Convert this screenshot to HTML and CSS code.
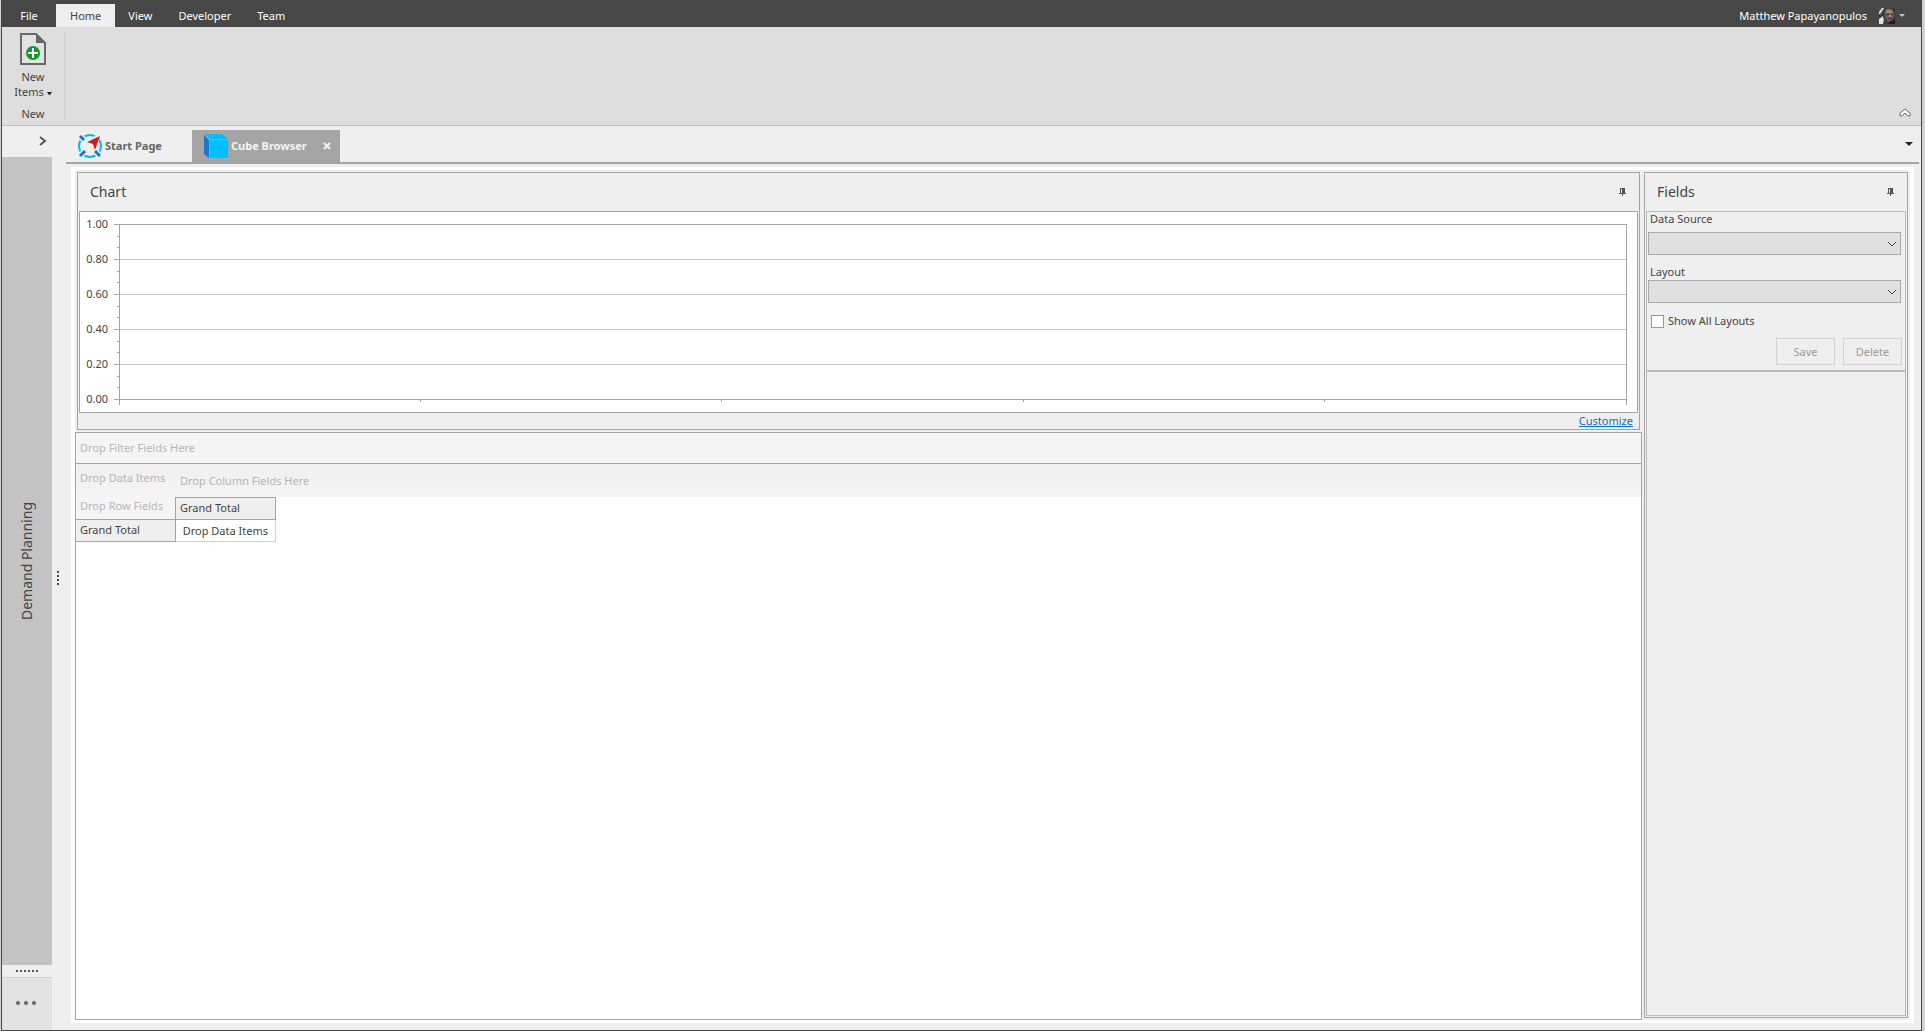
FILE: index.html
```html
<!DOCTYPE html>
<html lang="en">
<head>
    <meta charset="UTF-8">
    <meta name="viewport" content="width=device-width, initial-scale=1.0">
    <title>Cube Browser</title>
    <link rel="stylesheet" href="styles.css">
</head>
<body>
<div class="window">
    <header class="titlebar">
        <nav class="menu">
            <button type="button" class="menu-tab file">File</button>
            <button type="button" class="menu-tab active">Home</button>
            <button type="button" class="menu-tab">View</button>
            <button type="button" class="menu-tab">Developer</button>
            <button type="button" class="menu-tab">Team</button>
        </nav>
        <button type="button" class="user">
            <span>Matthew Papayanopulos</span>
            <svg class="avatar" width="16" height="16" viewBox="0 0 16 16">
                <rect width="16" height="16" fill="#3b3936"/>
                <path d="M0 0h6L2 7H0z" fill="#3f5358"/>
                <path d="M3 0h2L1 6H0V4zM0 11l4-3 1 3-1 5H0z" fill="#dce6e6"/>
                <path d="M6 2l3-2 5 2 1 6-2 5-4 1-3-5z" fill="#745f55"/>
                <path d="M8 2h4l2 3H7zM10 7h2v2h-2z" fill="#a58b7d"/>
                <path d="M7 6h3v1H7zM12 6h2v1h-2zM9 10h4v1H9z" fill="#382f2b"/>
                <path d="M4 5l2-3v7l2 5-2 2-2-8z" fill="#3a4346"/>
                <path d="M10 14l6-3v5h-7z" fill="#1f1c1b"/>
            </svg>
            <svg width="6" height="3" viewBox="0 0 6 3"><path d="M0 0h6L3 3z" fill="#c8c8c8"/></svg>
        </button>
    </header>

    <section class="ribbon">
        <div class="ribbon-group">
            <button type="button" class="ribbon-button">
                <svg width="28" height="32" viewBox="0 0 28 32">
                    <path d="M2 1h15l9 9v21H2z" fill="#e2e2e2" stroke="#686868" stroke-width="2"/>
                    <path d="M17 0l10 10H17z" fill="#686868"/>
                    <circle cx="14" cy="20" r="7" fill="#0e9b28"/>
                    <path d="M13 15h2v4h4v2h-4v4h-2v-4H9v-2h4z" fill="#fff"/>
                </svg>
                <span>New</span>
                <span>Items <svg width="5" height="3" viewBox="0 0 5 3"><path d="M0 0h5L3 3H2z" fill="#222"/></svg></span>
            </button>
            <span class="group-name">New</span>
        </div>
        <button type="button" class="collapse" aria-label="Collapse ribbon">
            <svg width="12" height="9" viewBox="0 0 12 9"><path d="M1 5l5-4 5 4v3H9L6 5 3 8H1z" fill="#fff" stroke="#686868"/></svg>
        </button>
    </section>

    <div class="content">
        <aside class="sidebar">
            <button type="button" class="expand" aria-label="Expand">
                <svg width="8" height="10" viewBox="0 0 8 10"><path d="M1 1l5 4-5 4" fill="none" stroke="#555" stroke-width="2"/></svg>
            </button>
            <div class="nav-group"><span>Demand Planning</span></div>
            <div class="nav-grip"><svg width="22" height="2"><path d="M0 1h22" stroke="#555" stroke-width="2" stroke-dasharray="2 2"/></svg></div>
            <button type="button" class="nav-more" aria-label="More">
                <svg width="20" height="4" viewBox="0 0 20 4"><circle cx="2" cy="2" r="2"/><circle cx="10" cy="2" r="2"/><circle cx="18" cy="2" r="2"/></svg>
            </button>
        </aside>
        <div class="splitter"><svg width="2" height="14"><path d="M1 0v14" stroke="#444" stroke-width="2" stroke-dasharray="2 2"/></svg></div>

        <main class="documents">
            <div class="doc-tabs">
                <button type="button" class="doc-tab start">
                    <svg width="24" height="24" viewBox="0 0 24 24">
                        <circle cx="12" cy="12" r="11" fill="none" stroke="#00bdf9" stroke-width="2"/>
                        <path d="M15 8l7-7M1 1l5 5M1 23l5-5M23 23l-5-5" stroke="#efefef" stroke-width="6"/>
                        <path d="M2 2l4 4M2 22l5-5M22 22l-5-5" stroke="#1976d2" stroke-width="3"/>
                        <path d="M22 2l-5 14-2-6-6-2z" fill="#d8171e"/>
                    </svg>
                    Start Page
                </button>
                <button type="button" class="doc-tab active">
                    <svg width="24" height="24" viewBox="0 0 24 24">
                        <path d="M0 1l5 5v18l-5-4z" fill="#1976d2"/>
                        <path d="M1 0h17l6 5H6z" fill="#00bfff"/>
                        <path d="M6 6h18v18H6z" fill="#00bfff"/>
                    </svg>
                    Cube Browser
                    <svg class="close" width="8" height="8" viewBox="0 0 8 8"><path d="M1 1l6 6M7 1L1 7" stroke="#f4f4f4" stroke-width="2"/></svg>
                </button>
                <button type="button" class="doc-list" aria-label="Open documents">
                    <svg width="8" height="4" viewBox="0 0 8 4"><path d="M0 0h8L4 4z" fill="#222"/></svg>
                </button>
            </div>

            <div class="workspace">
                <div class="center">
                    <section class="panel chart">
                        <div class="panel-header">
                            <h2>Chart</h2>
                            <button type="button" class="pin" aria-label="Pin chart">
                                <svg width="7" height="8" viewBox="0 0 7 8"><path d="M1 0h5v5h1v1H4v2H3V6H0V5h1z" fill="#555"/><path d="M2 1h1v4H2z" fill="#efefef"/></svg>
                            </button>
                        </div>
                        <div class="chart-box">
                            <svg class="axis" width="39" height="200" viewBox="0 0 39 200">
                                <g>
                                    <text x="28" y="16">1.00</text>
                                    <text x="28" y="51">0.80</text>
                                    <text x="28" y="86">0.60</text>
                                    <text x="28" y="121">0.40</text>
                                    <text x="28" y="156">0.20</text>
                                    <text x="28" y="191">0.00</text>
                                </g>
                                <path d="M34 12h5M34 47h5M34 82h5M34 117h5M34 152h5M34 187h5M37 24h2M37 35h2M37 59h2M37 70h2M37 94h2M37 105h2M37 129h2M37 140h2M37 164h2M37 175h2"/>
                            </svg>
                            <svg class="plot" height="200">
                                <g class="grid-lines">
                                    <line x1="0" x2="100%" y1="47" y2="47"/>
                                    <line x1="0" x2="100%" y1="82" y2="82"/>
                                    <line x1="0" x2="100%" y1="117" y2="117"/>
                                    <line x1="0" x2="100%" y1="152" y2="152"/>
                                </g>
                                <g class="frame">
                                    <line x1="0" x2="100%" y1="12" y2="12"/>
                                    <line x1="0" x2="100%" y1="187" y2="187"/>
                                    <line x1="20%" x2="20%" y1="187" y2="190"/>
                                    <line x1="40%" x2="40%" y1="187" y2="190"/>
                                    <line x1="60%" x2="60%" y1="187" y2="190"/>
                                    <line x1="80%" x2="80%" y1="187" y2="190"/>
                                    <line x1="0" x2="0" y1="12" y2="193"/>
                                    <line x1="100%" x2="100%" y1="12" y2="193"/>
                                </g>
                            </svg>
                        </div>
                        <div class="chart-footer"><a href="#">Customize</a></div>
                    </section>

                    <section class="pivot">
                        <table>
                            <colgroup><col class="fixed"><col class="fixed"><col></colgroup>
                            <tr class="filter-row">
                                <td colspan="3">Drop Filter Fields Here</td>
                            </tr>
                            <tr class="column-row">
                                <td>Drop Data Items</td>
                                <td colspan="2" class="column-fields">Drop Column Fields Here</td>
                            </tr>
                            <tr class="header-row">
                                <td class="row-fields">Drop Row Fields</td>
                                <th scope="col">Grand Total</th>
                                <td></td>
                            </tr>
                            <tr class="total-row">
                                <th scope="row">Grand Total</th>
                                <td class="data">Drop Data Items</td>
                                <td></td>
                            </tr>
                        </table>
                    </section>
                </div>

                <section class="panel fields">
                    <div class="panel-header">
                        <h2>Fields</h2>
                        <button type="button" class="pin" aria-label="Pin fields">
                            <svg width="7" height="8" viewBox="0 0 7 8"><path d="M1 0h5v5h1v1H4v2H3V6H0V5h1z" fill="#555"/><path d="M2 1h1v4H2z" fill="#efefef"/></svg>
                        </button>
                    </div>
                    <form class="fields-form">
                        <label for="dataSource">Data Source</label>
                        <div class="combo">
                            <select id="dataSource"></select>
                            <svg width="9" height="6" viewBox="0 0 9 6"><path d="M0 1l4 4 4-4" fill="none" stroke="#444"/></svg>
                        </div>
                        <label for="layout">Layout</label>
                        <div class="combo">
                            <select id="layout"></select>
                            <svg width="9" height="6" viewBox="0 0 9 6"><path d="M0 1l4 4 4-4" fill="none" stroke="#444"/></svg>
                        </div>
                        <div class="check">
                            <input type="checkbox" id="showAll">
                            <label for="showAll">Show All Layouts</label>
                        </div>
                        <div class="buttons">
                            <button type="button" disabled>Save</button>
                            <button type="button" disabled>Delete</button>
                        </div>
                    </form>
                    <div class="field-list"></div>
                </section>
            </div>
        </main>
    </div>
</div>
</body>
</html>
```
FILE: styles.css
```css
* {
    box-sizing: border-box;
}

body {
    margin: 0;
    background-color: #d2d2d2;
    font-family: "Noto Sans", "Open Sans", sans-serif;
    font-size: 11px;
    line-height: 16px;
    color: #444;
}

button {
    padding: 0;
    border: none;
    background: none;
    font: inherit;
    color: inherit;
}

svg {
    display: block;
    flex: none;
}

.window {
    display: flex;
    flex-direction: column;
    height: 100vh;
    margin: 0 3px 0 1px;
    border: 1px solid #474747;
    border-top: none;
    background-color: #efefef;
}

/* title bar */
.titlebar {
    display: flex;
    justify-content: space-between;
    height: 27px;
    background-color: #474747;
    color: #fff;
}

.menu {
    display: flex;
    align-items: flex-end;
}

.menu-tab {
    height: 23px;
    padding: 0 13px;
}

.menu-tab.file {
    width: 54px;
}

.menu-tab.active {
    padding: 0 14px;
    background-color: #efefef;
    color: #444;
}

.user {
    display: flex;
    align-items: center;
    gap: 4px;
    padding: 4px 16px 0 0;
}

.avatar {
    margin-left: 8px;
}

/* ribbon */
.ribbon {
    display: flex;
    justify-content: space-between;
    align-items: flex-end;
    height: 99px;
    border-bottom: 1px solid #c0c0c0;
    background-color: #dedede;
}

.ribbon-group {
    display: flex;
    flex-direction: column;
    justify-content: space-between;
    align-items: center;
    width: 63px;
    height: 86px;
    margin-bottom: 6px;
    border-right: 1px solid #d0d0d0;
}

.ribbon-button {
    display: flex;
    flex-direction: column;
    align-items: center;
    line-height: 15px;
}

.ribbon-button > svg {
    margin-bottom: 4px;
}

.ribbon-button span svg {
    display: inline-block;
    vertical-align: middle;
}

.group-name {
    line-height: 10px;
}

.collapse {
    padding: 0 10px 8px 0;
}

/* body of the window */
.content {
    display: flex;
    flex: 1;
    min-height: 0;
}

.sidebar {
    display: flex;
    flex-direction: column;
    width: 50px;
}

.expand {
    display: flex;
    justify-content: flex-end;
    align-items: center;
    height: 31px;
    padding: 0 5px 2px 0;
}

.nav-group {
    display: flex;
    flex: 1;
    justify-content: center;
    align-items: center;
    background-color: #c3c3c3;
    font-size: 14px;
}

.nav-group span {
    writing-mode: vertical-rl;
    transform: rotate(180deg);
}

.nav-grip {
    display: flex;
    justify-content: center;
    align-items: center;
    height: 13px;
    border-bottom: 1px solid #cfcfcf;
}

.nav-more {
    display: flex;
    justify-content: center;
    align-items: center;
    height: 52px;
    padding: 0 2px 2px 0;
    background-color: #e3e3e3;
    fill: #666;
}

.splitter {
    display: flex;
    align-items: center;
    width: 14px;
    padding-left: 5px;
}

.documents {
    display: flex;
    flex: 1;
    flex-direction: column;
    min-width: 0;
    padding-right: 2px;
}

.doc-tabs {
    display: flex;
    align-items: flex-end;
    height: 38px;
    border-bottom: 2px solid #a5a5a5;
}

.doc-tab {
    display: flex;
    align-items: center;
    gap: 3px;
    height: 32px;
    padding: 0 9px 0 12px;
    font-weight: bold;
    color: #666;
}

.doc-tab.start {
    width: 126px;
}

.doc-tab.active {
    width: 148px;
    background-color: #a5a5a5;
    color: #f4f4f4;
}

.close {
    margin-left: auto;
}

.doc-list {
    align-self: center;
    margin-left: auto;
    padding-right: 6px;
}

.workspace {
    display: flex;
    flex: 1;
    gap: 2px;
    min-height: 0;
    margin: 3px 5px 7px;
    padding-right: 2px;
    border: solid #fff;
    border-width: 3px 4px;
}

.center {
    display: flex;
    flex: 1;
    flex-direction: column;
    gap: 2px;
    min-width: 0;
}

.panel {
    display: flex;
    flex-direction: column;
    border: 1px solid #a5a5a5;
}

.panel-header {
    display: flex;
    justify-content: space-between;
    align-items: center;
    height: 38px;
    padding: 0 13px 0 12px;
}

.panel-header h2 {
    margin: 0;
    font-size: 14px;
    font-weight: normal;
}

/* chart */
.chart {
    margin: 2px 2px 0;
}

.chart-box {
    display: flex;
    margin: 0 1px;
    padding-right: 11px;
    border: 1px solid #a5a5a5;
    background-color: #fff;
}

.axis path {
    stroke: #a5a5a5;
    shape-rendering: crispEdges;
}

.axis text {
    font-size: 11px;
    fill: #444;
    text-anchor: end;
}

.plot {
    flex: 1;
    min-width: 0;
    overflow: visible;
    shape-rendering: crispEdges;
}

.grid-lines {
    stroke: #c8c8c8;
}

.frame {
    stroke: #a5a5a5;
}

.chart-footer {
    height: 16px;
    padding-right: 6px;
    text-align: right;
}

.chart-footer a {
    color: #0072c6;
}

/* pivot grid */
.pivot {
    flex: 1;
    border: 1px solid #a5a5a5;
    background-color: #fff;
}

.pivot table {
    width: 100%;
    table-layout: fixed;
    border-spacing: 0;
    color: #b5b5b5;
}

.pivot col.fixed {
    width: 100px;
}

.pivot td,
.pivot th {
    padding: 0 4px;
    font-weight: normal;
    text-align: left;
    white-space: nowrap;
}

.pivot th {
    padding-bottom: 2px;
    border-right: 1px solid #a5a5a5;
    border-bottom: 1px solid #a5a5a5;
    background-color: #efefef;
    color: #444;
}

.filter-row td {
    height: 31px;
    border-bottom: 1px solid #a5a5a5;
    background-color: #f5f5f5;
}

.column-row {
    height: 33px;
    background: linear-gradient(#f0f0f0, #f4f4f4);
}

.column-row td:first-child {
    padding-bottom: 6px;
}

.header-row {
    height: 23px;
}

.header-row th {
    border-top: 1px solid #a5a5a5;
}

.header-row .row-fields {
    padding-bottom: 5px;
    border-right: 1px solid #a5a5a5;
    border-bottom: 1px solid #a5a5a5;
    background-color: #f5f5f5;
}

.total-row {
    height: 22px;
}

.total-row .data {
    padding-right: 7px;
    border-right: 1px solid #d0d0d0;
    border-bottom: 1px solid #d0d0d0;
    color: #444;
    text-align: right;
}

/* fields panel */
.fields {
    width: 264px;
    margin: 2px 0;
    padding: 0 1px 1px;
}

.fields .panel-header {
    padding: 0 12px 0 11px;
}

.fields-form {
    display: flex;
    flex-direction: column;
    height: 160px;
    padding: 0 3px 0 1px;
    border: 1px solid #bbb;
}

.fields-form label {
    padding-left: 2px;
    line-height: 14px;
}

.combo {
    display: grid;
    align-items: center;
    margin: 6px 1px 10px 0;
}

.combo + label + .combo {
    margin: 1px 1px 11px 0;
}

.combo select,
.combo svg {
    grid-area: 1 / 1;
}

.combo select {
    appearance: none;
    width: 100%;
    height: 23px;
    border: 1px solid #a9a9a9;
    border-radius: 0;
    background-color: #e0e0e0;
    font: inherit;
}

.combo svg {
    justify-self: end;
    margin-right: 4px;
    pointer-events: none;
}

.check {
    display: flex;
    align-items: center;
    padding-left: 3px;
}

.check input {
    appearance: none;
    width: 13px;
    height: 13px;
    margin: 0 2px 0 0;
    border: 1px solid #999;
    background-color: #fff;
}

.check input:checked {
    background-color: #0072c6;
}

.buttons {
    display: flex;
    justify-content: flex-end;
    gap: 8px;
    margin-top: 10px;
}

.buttons button {
    width: 59px;
    height: 27px;
    border: 1px solid #d2d2d2;
    color: #999;
}

.field-list {
    flex: 1;
    border: 1px solid #bbb;
}
```
